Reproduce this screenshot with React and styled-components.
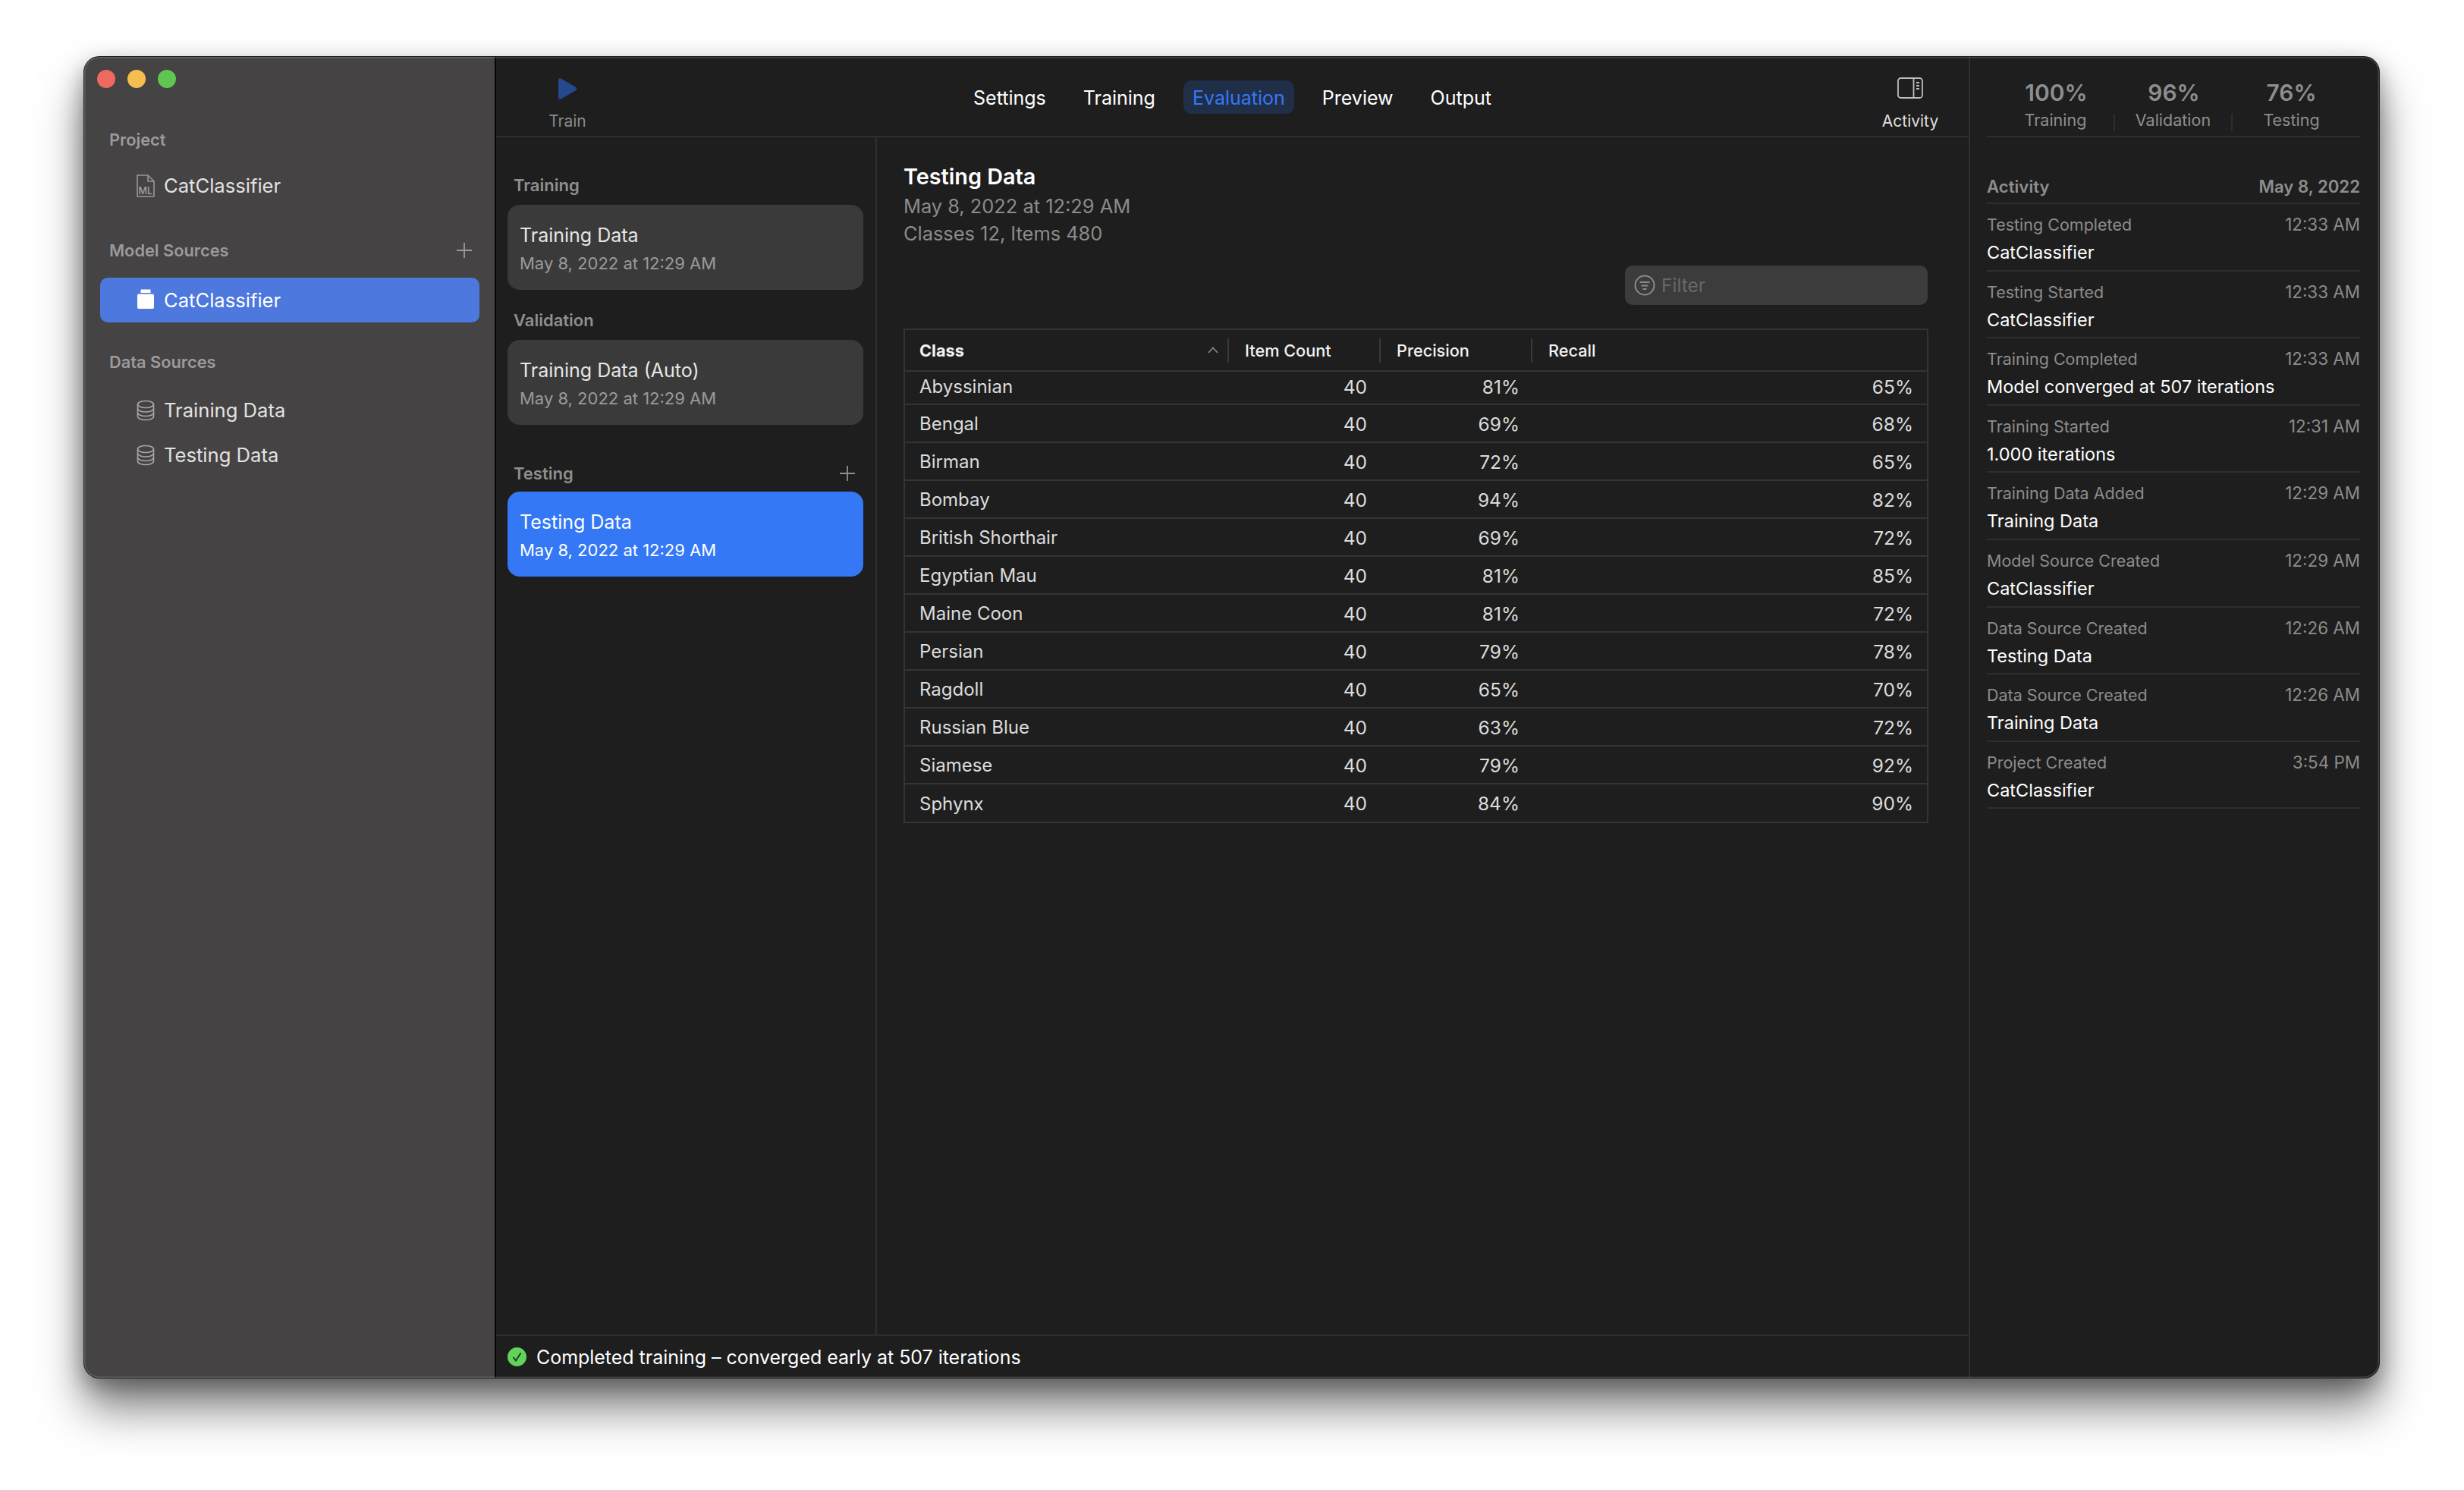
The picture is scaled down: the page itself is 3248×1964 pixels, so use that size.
import React from 'react';
import styled, { createGlobalStyle } from 'styled-components';

const GlobalStyle = createGlobalStyle`
    html, body {
        margin: 0;
        background: #ffffff;
        font-family: Inter, "Liberation Sans", sans-serif;
        -webkit-font-smoothing: antialiased;
    }
    * { box-sizing: border-box; }
`

const Page = styled.div`
    width: 3248px;
    height: 1964px;
    padding: 75px 0 0 111px;
    overflow: hidden;
`
const Window = styled.div`
    position: relative;
    width: 3025px;
    height: 1741px;
    display: flex;
    border-radius: 20px;
    overflow: hidden;
    background: #1e1e1e;
    box-shadow: 0 0 0 1px #1a1a1a, 0 40px 60px rgba(0, 0, 0, 0.5), 0 10px 30px rgba(0, 0, 0, 0.35);
    &::after {
        content: "";
        position: absolute;
        inset: 0;
        border-radius: 20px;
        box-shadow: inset 0 0 0 1.5px rgba(255, 255, 255, 0.16);
        pointer-events: none;
    }
`

/* sidebar */
const Sidebar = styled.aside`
    width: 543px;
    flex-shrink: 0;
    background: #454344;
    border-right: 2px solid #050505;
    padding-top: 17px;
`
const Lights = styled.div`
    display: flex;
    gap: 16px;
    padding-left: 17px;
    margin-bottom: 55px;
`
const Light = styled.span`
    width: 24px;
    height: 24px;
    border-radius: 50%;
    background: ${p => p.$color};
`
const SideLabel = styled.div`
    display: flex;
    align-items: center;
    justify-content: space-between;
    height: 26px;
    padding: 0 29px 0 33px;
    margin-top: ${p => p.$top || 0}px;
    margin-bottom: ${p => p.$bottom || 0}px;
    font-size: 21.8px;
    font-weight: 600;
    color: #9c9a9b;
`
const SideRow = styled.div`
    display: flex;
    align-items: center;
    gap: 12px;
    width: 500px;
    height: 59px;
    margin-left: 21px;
    padding-left: 48px;
    border-radius: 10px;
    font-size: 25.6px;
    color: ${p => (p.$active ? '#ffffff' : '#e3e2e2')};
    background: ${p => (p.$active ? '#4d78de' : 'transparent')};
`
const SideIcon = styled.svg`
    width: 24px;
    height: 30px;
    flex-shrink: 0;
`
const PlusIcon = styled.svg`
    width: 22px;
    height: 22px;
`

/* centre column */
const Center = styled.div`
    flex: 1;
    min-width: 0;
    display: flex;
    flex-direction: column;
`
const Toolbar = styled.header`
    height: 106px;
    flex-shrink: 0;
    display: grid;
    grid-template-columns: 1fr auto 1fr;
    align-items: start;
    border-bottom: 2px solid #2e2e2e;
`
const ToolButton = styled.div`
    display: flex;
    flex-direction: column;
    align-items: center;
    width: 80px;
    height: 104px;
    padding-top: 27px;
    font-size: 21px;
    color: ${p => p.$color};
    justify-self: ${p => p.$end ? 'end' : 'start'};
    margin: ${p => p.$end ? '0 37px 0 0' : '0 0 0 54px'};
`
const ToolIconBox = styled.div`
    height: 32px;
    margin-bottom: 13px;
    display: flex;
    align-items: flex-start;
`
const Tabs = styled.nav`
    display: flex;
    gap: 25px;
    padding-top: 31px;
`
const Tab = styled.div`
    height: 44px;
    line-height: 46px;
    padding: 0 12px;
    border-radius: 10px;
    font-size: 25px;
    color: ${p => (p.$active ? '#3478f6' : '#ffffff')};
    background: ${p => (p.$active ? '#202e48' : 'transparent')};
`
const Body = styled.div`
    flex: 1;
    min-height: 0;
    display: flex;
`
const ListColumn = styled.div`
    width: 502px;
    flex-shrink: 0;
    padding: 50px 16px 0 15px;
    border-right: 2px solid #2e2e2e;
`
const ListLabel = styled.div`
    display: flex;
    align-items: center;
    justify-content: space-between;
    height: 26px;
    padding: 0 10px 0 8px;
    margin-top: ${p => p.$top || 0}px;
    margin-bottom: ${p => p.$bottom}px;
    font-size: 22px;
    font-weight: 600;
    color: #8f8f8f;
`
const DataCard = styled.div`
    height: 112px;
    padding: 25px 16px 0;
    border-radius: 16px;
    background: ${p => (p.$active ? '#3478f6' : '#3a3a3a')};
`
const CardTitle = styled.div`
    height: 30px;
    line-height: 30px;
    font-size: 25px;
    color: ${p => (p.$active ? '#ffffff' : '#e6e6e6')};
`
const CardDate = styled.div`
    height: 28px;
    line-height: 28px;
    margin-top: 8px;
    font-size: 22px;
    color: ${p => (p.$active ? '#ffffff' : '#9a9a9a')};
`
const Detail = styled.main`
    flex: 1;
    min-width: 0;
    display: flex;
    flex-direction: column;
    padding: 34px 54px 0 35px;
`
const DetailTitle = styled.h1`
    margin: 0 0 3px;
    height: 36px;
    line-height: 36px;
    font-size: 28.8px;
    font-weight: 600;
    color: #ffffff;
`
const DetailLine = styled.div`
    height: 36px;
    line-height: 36px;
    font-size: 25.4px;
    color: #8b8b8b;
`
const FilterBox = styled.div`
    align-self: flex-end;
    width: 399px;
    height: 52px;
    margin: 24px 0 31px 0;
    display: flex;
    align-items: center;
    gap: 8px;
    padding-left: 12px;
    border-radius: 10px;
    background: #3c3c3c;
    font-size: 24.5px;
    color: #686868;
`
const Table = styled.div`
    border: 2px solid #343434;
    margin-right: -1px;
`
const HeadRow = styled.div`
    display: grid;
    grid-template-columns: 427px 200px 200px 1fr;
    height: 55px;
    align-items: center;
    border-bottom: 2px solid #343434;
`
const HeadCell = styled.div`
    display: flex;
    align-items: center;
    justify-content: space-between;
    height: 32px;
    padding: 0 12px 0 ${p => (p.$first ? 19 : 21)}px;
    border-right: ${p => (p.$last ? 'none' : '2px solid #3a3a3a')};
    font-size: 21.7px;
    font-weight: ${p => (p.$first ? 700 : 500)};
    color: #f2f2f2;
`
const DataRow = styled.div`
    display: grid;
    grid-template-columns: 427px 200px 200px 1fr;
    height: ${p => (p.$first ? 44 : p.$last ? 49 : 50)}px;
    padding: ${p => (p.$first ? '0 0 3px' : '1px 0 0')};
    align-items: center;
    border-bottom: ${p => (p.$last ? 'none' : '2px solid #343434')};
    font-size: 24px;
    color: #dcdcdc;
`
const NameCell = styled.div`
    padding-left: 19px;
`
const NumCell = styled.div`
    text-align: right;
    padding-right: ${p => p.$pad}px;
    font-size: 24.5px;
`
const StatusBar = styled.footer`
    height: 57px;
    flex-shrink: 0;
    display: flex;
    align-items: center;
    gap: 13px;
    padding-left: 15px;
    border-top: 2px solid #2e2e2e;
    font-size: 24.95px;
    color: #ffffff;
`

/* right panel */
const Inspector = styled.aside`
    width: 541px;
    flex-shrink: 0;
    padding: 0 25px 0 22px;
    border-left: 2px solid #2e2e2e;
`
const Stats = styled.div`
    height: 106px;
    display: grid;
    grid-template-columns: repeat(3, 155px);
    padding: 29px 0 0 14px;
    border-bottom: 2px solid #2e2e2e;
`
const Stat = styled.div`
    text-align: center;
`
const StatValue = styled.div`
    height: 36px;
    line-height: 36px;
    margin-bottom: 10px;
    font-size: 30px;
    font-weight: 600;
    color: #8e8e8e;
`
const StatLabel = styled.div`
    height: 23px;
    line-height: 17px;
    font-size: 21.5px;
    color: #8e8e8e;
    border-right: ${p => (p.$last ? 'none' : '2px solid #2e2e2e')};
`
const ActivityHead = styled.div`
    display: flex;
    justify-content: space-between;
    margin-top: 52px;
    height: 36px;
    line-height: 26px;
    border-bottom: 2px solid #2e2e2e;
    font-size: 22.2px;
    font-weight: 600;
    color: #8e8e8e;
`
const ActivityRow = styled.div`
    height: 88.6px;
    padding-top: 14px;
    border-bottom: 2px solid #2e2e2e;
`
const ActivityTop = styled.div`
    display: flex;
    justify-content: space-between;
    height: 26px;
    line-height: 26px;
    font-size: 21.5px;
    color: #8c8c8c;
`
const ActivityTime = styled.span`
    font-size: 22.4px;
`
const ActivityValue = styled.div`
    height: 28px;
    line-height: 28px;
    margin-top: 10px;
    font-size: 23.5px;
    color: #ffffff;
`

const DocIcon = () => (
    <SideIcon viewBox="0 0 24 30" fill="none" stroke="#9a9899" strokeWidth="1.6">
        <path d="M1 1h14l8 8v20H1z" />
        <path d="M15 1v8h8" />
        <text x="2.5" y="25.500" fontSize="12.500" fontFamily="Inter, sans-serif" fontWeight="500" fill="#a5a3a4" stroke="none">ML</text>
    </SideIcon>
);

const BottleIcon = () => (
    <SideIcon viewBox="0 0 24 30" fill="#ffffff">
        <path d="M5.5 1.5c0-.6.4-1 1-1h11c.6 0 1 .4 1 1V5h-13z" />
        <path d="M3 6.5h18c1.2 0 2 .9 2 2V24c0 1.2-.8 2-2 2H3c-1.200 0-2-.8-2-2V8.500c0-1.100.8-2 2-2z" />
    </SideIcon>
);

const DatabaseIcon = () => (
    <SideIcon viewBox="0 0 24 30" fill="none" stroke="#a8a6a7" strokeWidth="1.6">
        <ellipse cx="12" cy="7" rx="10.500" ry="4.500" />
        <path d="M1.500 7v16c0 2.500 4.700 4.500 10.500 4.500s10.500-2 10.500-4.500V7" />
        <path d="M1.500 12.500c0 2.500 4.700 4.500 10.500 4.500s10.500-2 10.500-4.500" />
        <path d="M1.500 18c0 2.500 4.700 4.500 10.500 4.500s10.500-2 10.500-4.500" />
    </SideIcon>
);

const Plus = ({ color }) => (
    <PlusIcon viewBox="0 0 22 22" stroke={color} strokeWidth="1.800">
        <path d="M11 1v20M1 11h20" />
    </PlusIcon>
);

const testingRows = [
    ['Abyssinian', 81, 65], ['Bengal', 69, 68], ['Birman', 72, 65], ['Bombay', 94, 82],
    ['British Shorthair', 69, 72], ['Egyptian Mau', 81, 85], ['Maine Coon', 81, 72], ['Persian', 79, 78],
    ['Ragdoll', 65, 70], ['Russian Blue', 63, 72], ['Siamese', 79, 92], ['Sphynx', 84, 90],
];

const activity = [
    ['Testing Completed', '12:33 AM', 'CatClassifier'],
    ['Testing Started', '12:33 AM', 'CatClassifier'],
    ['Training Completed', '12:33 AM', 'Model converged at 507 iterations'],
    ['Training Started', '12:31 AM', '1.000 iterations'],
    ['Training Data Added', '12:29 AM', 'Training Data'],
    ['Model Source Created', '12:29 AM', 'CatClassifier'],
    ['Data Source Created', '12:26 AM', 'Testing Data'],
    ['Data Source Created', '12:26 AM', 'Training Data'],
    ['Project Created', '3:54 PM', 'CatClassifier'],
];

const App = () => {
    return (
        <Page>
            <GlobalStyle />
            <Window>
                <Sidebar>
                    <Lights>
                        <Light $color="#ee6a5f" />
                        <Light $color="#f5bf4f" />
                        <Light $color="#61c554" />
                    </Lights>
                    <SideLabel $bottom={18}>Project</SideLabel>
                    <SideRow><DocIcon />CatClassifier</SideRow>
                    <SideLabel $top={43} $bottom={23}>Model Sources<Plus color="#9c9a9b" /></SideLabel>
                    <SideRow $active><BottleIcon />CatClassifier</SideRow>
                    <SideLabel $top={39} $bottom={21}>Data Sources</SideLabel>
                    <SideRow><DatabaseIcon />Training Data</SideRow>
                    <SideRow><DatabaseIcon />Testing Data</SideRow>
                </Sidebar>

                <Center>
                    <Toolbar>
                        <ToolButton $color="#8a8a8a">
                            <ToolIconBox>
                                <svg width="26" height="30" viewBox="0 0 26 30" fill="#24498e">
                                    <path d="M1 3.500C1 1.500 2.700.600 4.400 1.500l19.800 11.500c1.500.9 1.500 3 0 3.900L4.400 28.500C2.700 29.400 1 28.500 1 26.500z" />
                                </svg>
                            </ToolIconBox>
                            Train
                        </ToolButton>
                        <Tabs>
                            <Tab>Settings</Tab>
                            <Tab>Training</Tab>
                            <Tab $active>Evaluation</Tab>
                            <Tab>Preview</Tab>
                            <Tab>Output</Tab>
                        </Tabs>
                        <ToolButton $color="#dedede" $end>
                            <ToolIconBox>
                                <svg width="34" height="28" viewBox="0 0 34 28" fill="none" stroke="#bdbdbd" strokeWidth="1.800">
                                    <rect x="1" y="1" width="32" height="26" rx="3.500" />
                                    <path d="M21.500 1v26" />
                                    <path d="M25 7h4M25 11h4M25 15h4" />
                                </svg>
                            </ToolIconBox>
                            Activity
                        </ToolButton>
                    </Toolbar>

                    <Body>
                        <ListColumn>
                            <ListLabel $bottom={13}>Training</ListLabel>
                            <DataCard>
                                <CardTitle>Training Data</CardTitle>
                                <CardDate>May 8, 2022 at 12:29 AM</CardDate>
                            </DataCard>
                            <ListLabel $top={27} $bottom={13}>Validation</ListLabel>
                            <DataCard>
                                <CardTitle>Training Data (Auto)</CardTitle>
                                <CardDate>May 8, 2022 at 12:29 AM</CardDate>
                            </DataCard>
                            <ListLabel $top={51} $bottom={11}>Testing<Plus color="#8f8f8f" /></ListLabel>
                            <DataCard $active>
                                <CardTitle $active>Testing Data</CardTitle>
                                <CardDate $active>May 8, 2022 at 12:29 AM</CardDate>
                            </DataCard>
                        </ListColumn>

                        <Detail>
                            <DetailTitle>Testing Data</DetailTitle>
                            <DetailLine>May 8, 2022 at 12:29 AM</DetailLine>
                            <DetailLine>Classes 12, Items 480</DetailLine>
                            <FilterBox>
                                <svg width="28" height="28" viewBox="0 0 28 28" fill="none" stroke="#8a8a8a" strokeWidth="2">
                                    <circle cx="14" cy="14" r="12.500" />
                                    <path d="M7.500 10h13M9.500 14.500h9M11.500 19h5" />
                                </svg>
                                Filter
                            </FilterBox>
                            <Table>
                                <HeadRow>
                                    <HeadCell $first>
                                        Class
                                        <svg width="14" height="9" viewBox="0 0 14 9" fill="none" stroke="#8a8a8a" strokeWidth="1.600">
                                            <path d="M1 8l6-6.500L13 8" />
                                        </svg>
                                    </HeadCell>
                                    <HeadCell>Item Count</HeadCell>
                                    <HeadCell>Precision</HeadCell>
                                    <HeadCell $last>Recall</HeadCell>
                                </HeadRow>
                                {testingRows.map(([name, precision, recall], i) => (
                                    <DataRow key={name} $first={i === 0} $last={i === testingRows.length - 1}>
                                        <NameCell>{name}</NameCell>
                                        <NumCell $pad={18}>40</NumCell>
                                        <NumCell $pad={17}>{precision}%</NumCell>
                                        <NumCell $pad={18}>{recall}%</NumCell>
                                    </DataRow>
                                ))}
                            </Table>
                        </Detail>
                    </Body>

                    <StatusBar>
                        <svg width="25" height="25" viewBox="0 0 25 25">
                            <circle cx="12.500" cy="12.500" r="12.500" fill="#62d25a" />
                            <path d="M7.500 13l3.500 4.500 6.500-10" fill="none" stroke="#15301a" strokeWidth="1.800" />
                        </svg>
                        Completed training – converged early at 507 iterations
                    </StatusBar>
                </Center>

                <Inspector>
                    <Stats>
                        <Stat><StatValue>100%</StatValue><StatLabel>Training</StatLabel></Stat>
                        <Stat><StatValue>96%</StatValue><StatLabel>Validation</StatLabel></Stat>
                        <Stat><StatValue>76%</StatValue><StatLabel $last>Testing</StatLabel></Stat>
                    </Stats>
                    <ActivityHead><span>Activity</span><span>May 8, 2022</span></ActivityHead>
                    {activity.map(([title, time, value], i) => (
                        <ActivityRow key={i}>
                            <ActivityTop><span>{title}</span><ActivityTime>{time}</ActivityTime></ActivityTop>
                            <ActivityValue>{value}</ActivityValue>
                        </ActivityRow>
                    ))}
                </Inspector>
            </Window>
        </Page>
    );
};

export default App;
